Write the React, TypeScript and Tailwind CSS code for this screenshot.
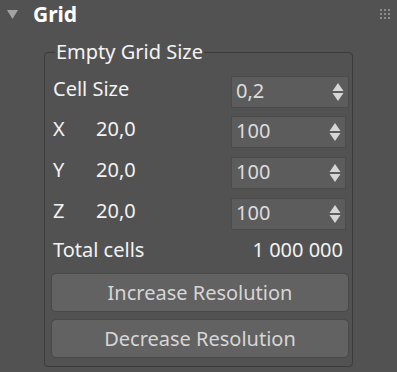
const FONT = { fontFamily: '"Noto Sans", "Open Sans", sans-serif' };

function Arrows() {
  return (
    <svg width="12" height="20" viewBox="0 0 12 20" className="text-[#d6d6d6]">
      <path d="M6 1 L11.5 9 L0.5 9 Z" fill="currentColor" />
      <path d="M0.5 11 L11.5 11 L6 19 Z" fill="currentColor" />
    </svg>
  );
}

function Spin({ value, wide }: { value: string; wide?: boolean }) {
  return (
    <div
      className={`flex h-[32px] items-center justify-between border border-[#4b4b4b] bg-[#5c5c5c] pl-[4px] pr-[4px] text-[20px] text-[#dcdcdc] ${
        wide ? "w-[118px]" : "w-[115px]"
      }`}
    >
      <span className="-mt-[2px]">{value}</span>
      <Arrows />
    </div>
  );
}

function Row({ label, value, spin, wide }: { label: string; value?: string; spin: string; wide?: boolean }) {
  return (
    <div className="flex h-[32px] items-center">
      <div className="-mt-[6px] ml-[2px] flex w-[178px] items-center text-[20px] text-[#f2f2f2]">
        {value ? (
          <>
            <span className="w-[43px]">{label}</span>
            <span>{value}</span>
          </>
        ) : (
          <span>{label}</span>
        )}
      </div>
      <Spin value={spin} wide={wide} />
    </div>
  );
}

export default function App() {
  return (
    <div className="h-[372px] w-[397px] overflow-hidden bg-[#525252]" style={FONT}>
      <div className="flex h-[30px] items-center">
        <svg width="11" height="9" viewBox="0 0 11 9" className="ml-[7px] mt-[-2px]">
          <path d="M0 0 L11 0 L5.5 9 Z" fill="#a3a3a3" />
        </svg>
        <span className="ml-[15px] text-[21px] font-bold text-white">Grid</span>
        <div className="ml-auto mr-[7px] grid grid-cols-3 gap-[2px] mt-[-2px]">
          {Array.from({ length: 9 }).map((_, i) => (
            <div key={i} className="h-[2px] w-[2px] bg-[#8c8c8c]" />
          ))}
        </div>
      </div>
      <fieldset className="ml-[44px] mt-[10px] w-[309px] rounded-[4px] border border-[#3b3b3b] pb-[8px] pl-[6px] pr-[3px]">
        <legend className="ml-[4px] px-[1px] text-[20px] leading-[24px] text-[#f4f4f4]">Empty Grid Size</legend>
        <div className="flex flex-col">
          <div className="mt-[12px]">
            <Row label="Cell Size" spin="0,2" wide />
          </div>
          <div className="mt-[8px]">
            <Row label="X" value="20,0" spin="100" />
          </div>
          <div className="mt-[9px]">
            <Row label="Y" value="20,0" spin="100" />
          </div>
          <div className="mt-[9px]">
            <Row label="Z" value="20,0" spin="100" />
          </div>
          <div className="mt-[8px] flex h-[24px] items-center justify-between pl-[2px] pr-[6px] text-[20px] text-[#f2f2f2]">
            <span>Total cells</span>
            <span>1 000 000</span>
          </div>
          <button className="mt-[11px] h-[39px] w-full rounded-[5px] border border-[#484848] bg-[#626262] text-[20px] text-[#d6d6d6]">
            Increase Resolution
          </button>
          <button className="mt-[7px] h-[39px] w-full rounded-[5px] border border-[#484848] bg-[#626262] text-[20px] text-[#d6d6d6]">
            Decrease Resolution
          </button>
        </div>
      </fieldset>
    </div>
  );
}
